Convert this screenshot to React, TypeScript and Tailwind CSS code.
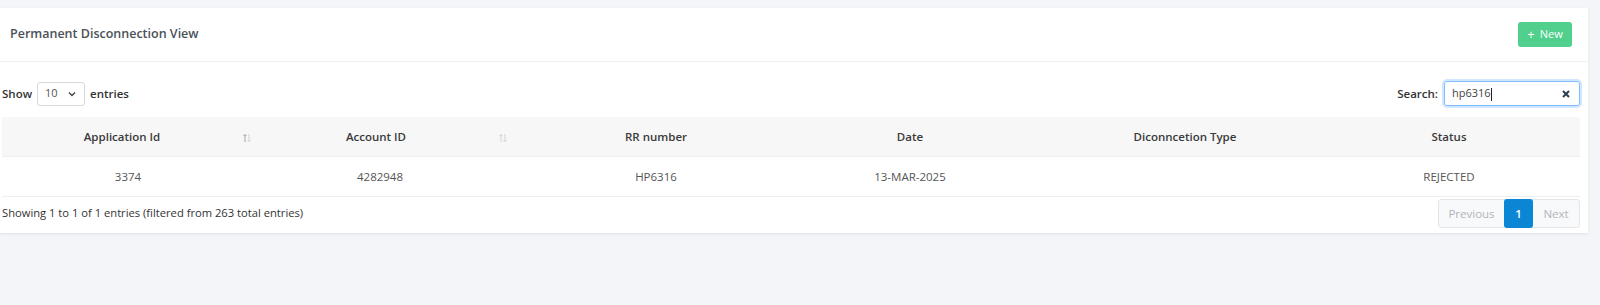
import React from 'react';

const cols = [
  { title: 'Application Id', w: 'w-[260px]', hp: 'pr-[20px]', dp: 'pr-[8px]', sort: 'right-[10px]' },
  { title: 'Account ID', w: 'w-[252px]', hp: 'pr-[24px]', dp: 'pr-[16px]', sort: 'right-[6px]' },
  { title: 'RR number', w: 'w-[284px]', hp: '', dp: '' },
  { title: 'Date', w: 'w-[224px]', hp: '', dp: '' },
  { title: 'Diconncetion Type', w: 'w-[326px]', hp: '', dp: '' },
  { title: 'Status', w: 'w-[232px]', hp: 'pr-[30px]', dp: 'pr-[30px]' },
];

const row = ['3374', '4282948', 'HP6316', '13-MAR-2025', '', 'REJECTED'];

const SortIcon = ({ dim }: { dim?: boolean }) => (
  <svg width="10" height="10" viewBox="0 0 10 10" fill="none" strokeWidth="1">
    <path d="M3 9V1.5M1.5 3L3 1.5 4.5 3" stroke={dim ? '#d0d3d6' : '#a3a7ab'} />
    <path d="M7 1v7.5M5.5 7L7 8.5 8.5 7" stroke="#d0d3d6" />
  </svg>
);

export default function App() {
  return (
    <div className="min-h-[305px] bg-[#f4f5f8] pt-[8px] pr-[12px] font-['Open_Sans',sans-serif]">
      <div className="bg-white shadow-[0_1px_3px_rgba(0,0,0,0.08)] pb-[3px]">
        {/* header */}
        <div className="h-[54px] flex items-center justify-between pl-[10px] pr-[16px] border-b border-[#eef0f2]">
          <h1 className="text-[12.5px] font-semibold text-[#4a5158]">Permanent Disconnection View</h1>
          <button className="h-[25px] w-[54px] rounded-[3px] bg-[#50d08c] text-white text-[11px] flex items-center justify-center gap-[5px]">
            <span className="text-[13px] leading-none">+</span>
            <span>New</span>
          </button>
        </div>

        <div className="pl-[2px] pr-[8px]">
          {/* controls */}
          <div className="mt-[19px] flex items-center justify-between h-[25px]">
            <div className="flex items-center text-[11.5px] text-[#333] font-semibold">
              <span>Show</span>
              <div className="ml-[5px] mr-[5px] w-[48px] h-[24px] border border-[#d6d9dd] rounded-[3px] flex items-center pl-[7px] gap-[9px] text-[11px] font-normal text-[#555]">
                <span>10</span>
                <svg width="10" height="10" viewBox="0 0 10 10" fill="none" stroke="#444" strokeWidth="1.4">
                  <path d="M2 3.5l3 3 3-3" />
                </svg>
              </div>
              <span>entries</span>
            </div>
            <div className="flex items-center text-[11.5px] text-[#333]">
              <span className="font-semibold mr-[6px]">Search:</span>
              <div className="w-[136px] h-[25px] border border-[#80bdff] rounded-[3px] shadow-[0_0_0_2px_rgba(0,123,255,0.18)] flex items-center justify-between pl-[7px] pr-[9px]">
                <span className="text-[11px] text-[#444]">hp6316<span className="inline-block w-px h-[13px] bg-[#222] align-middle"></span></span>
                <svg width="8" height="8" viewBox="0 0 8 8" stroke="#2c3e50" strokeWidth="2">
                  <path d="M1 1l6 6M7 1L1 7" />
                </svg>
              </div>
            </div>
          </div>

          {/* table */}
          <div className="mt-[11px]">
            <div className="flex h-[40px] bg-[#f7f7f7] border-b border-[#eceeef]">
              {cols.map((c, i) => (
                <div key={c.title} className={`${c.w} ${c.hp} relative flex items-center justify-center text-[11.5px] font-semibold text-[#3a3a3a]`}>
                  {c.title}
                  {c.sort && (
                    <span className={`absolute ${c.sort} top-[16px]`}>
                      <SortIcon dim={i === 1} />
                    </span>
                  )}
                </div>
              ))}
            </div>
            <div className="flex h-[40px] border-b border-[#eceeef]">
              {cols.map((c, i) => (
                <div key={c.title} className={`${c.w} ${c.dp} flex items-center justify-center text-[11.5px] text-[#555]`}>
                  {row[i]}
                </div>
              ))}
            </div>
          </div>

          {/* footer */}
          <div className="flex items-center justify-between h-[33px]">
            <span className="text-[11.2px] text-[#333]">Showing 1 to 1 of 1 entries (filtered from 263 total entries)</span>
            <div className="flex h-[29px] text-[11.5px] border border-[#e3e6e9] rounded-[3px] bg-[#f8f9fa]">
              <span className="w-[65px] flex items-center justify-center text-[#b0b5ba]">Previous</span>
              <span className="w-[29px] flex items-center justify-center bg-[#0b86d4] text-white font-semibold rounded-[3px] -my-px">1</span>
              <span className="w-[46px] flex items-center justify-center text-[#b0b5ba]">Next</span>
            </div>
          </div>
        </div>
      </div>
    </div>
  );
}
